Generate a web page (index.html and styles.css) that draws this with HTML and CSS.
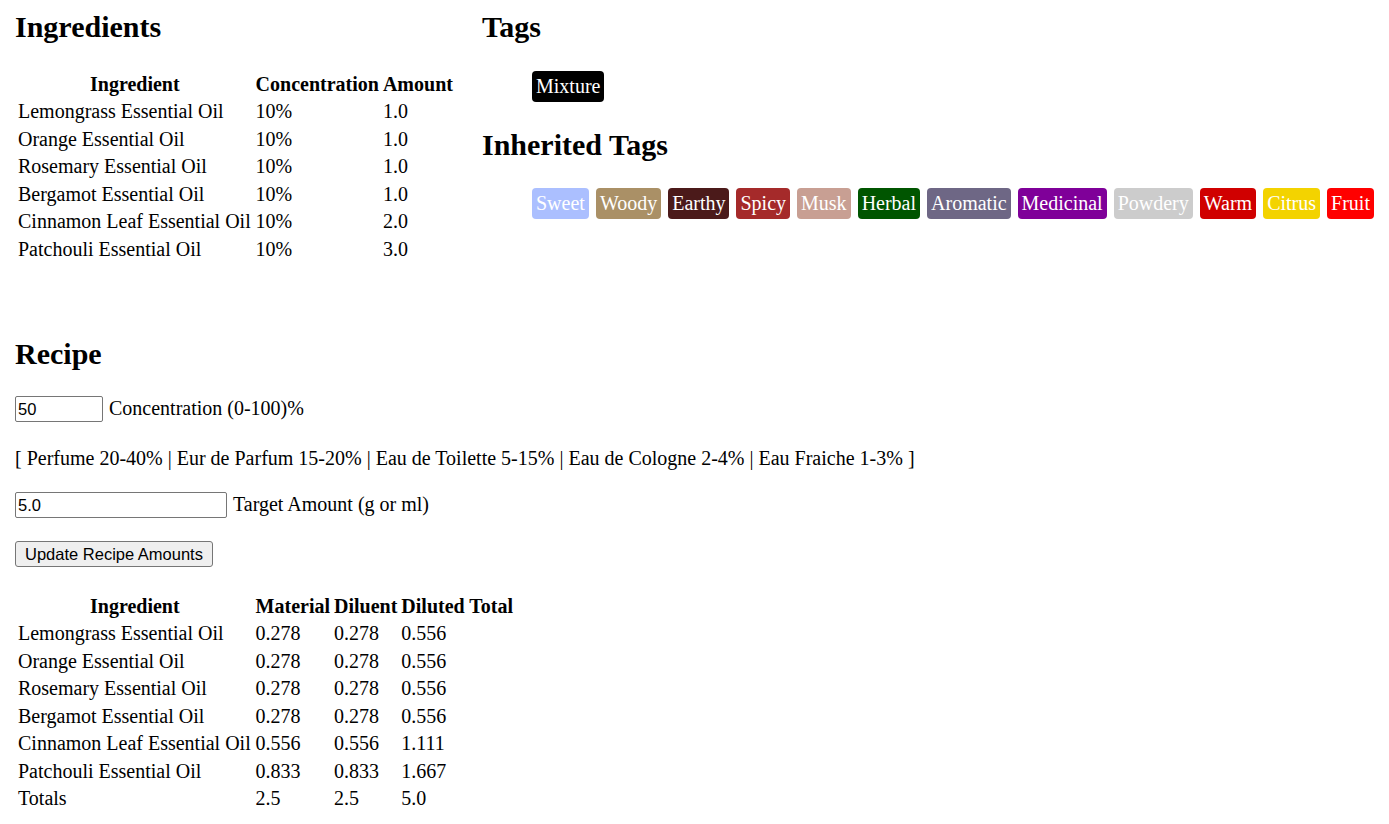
FILE: index.html
```html
<!DOCTYPE html>
<html>
<head>
<meta charset="utf-8">
<title>Mixture</title>
<link rel="stylesheet" href="styles.css">
</head>
<body>
<div class="top">
  <section class="ingredients">
    <h2>Ingredients</h2>
    <table class="grid ing-table">
      <thead>
        <tr><th class="col-name">Ingredient</th><th>Concentration</th><th>Amount</th></tr>
      </thead>
      <tbody>
        <tr><td>Lemongrass Essential Oil</td><td>10%</td><td>1.0</td></tr>
        <tr><td>Orange Essential Oil</td><td>10%</td><td>1.0</td></tr>
        <tr><td>Rosemary Essential Oil</td><td>10%</td><td>1.0</td></tr>
        <tr><td>Bergamot Essential Oil</td><td>10%</td><td>1.0</td></tr>
        <tr><td>Cinnamon Leaf Essential Oil</td><td>10%</td><td>2.0</td></tr>
        <tr><td>Patchouli Essential Oil</td><td>10%</td><td>3.0</td></tr>
      </tbody>
    </table>
  </section>
  <section class="tags">
    <h2>Tags</h2>
    <ul class="chips chips-own">
      <li class="chip chip-mixture">Mixture</li>
    </ul>
    <h2>Inherited Tags</h2>
    <ul class="chips chips-inherited">
      <li class="chip chip-sweet">Sweet</li>
      <li class="chip chip-woody">Woody</li>
      <li class="chip chip-earthy">Earthy</li>
      <li class="chip chip-spicy">Spicy</li>
      <li class="chip chip-musk">Musk</li>
      <li class="chip chip-herbal">Herbal</li>
      <li class="chip chip-aromatic">Aromatic</li>
      <li class="chip chip-medicinal">Medicinal</li>
      <li class="chip chip-powdery">Powdery</li>
      <li class="chip chip-warm">Warm</li>
      <li class="chip chip-citrus">Citrus</li>
      <li class="chip chip-fruit">Fruit</li>
    </ul>
  </section>
</div>

<section class="recipe">
  <h2>Recipe</h2>
  <div class="field field-conc">
    <input class="input input-conc" type="text" value="50">
    <label>Concentration (0-100)%</label>
  </div>
  <p class="guide">[ Perfume 20-40% | Eur de Parfum 15-20% | Eau de Toilette 5-15% | Eau de Cologne 2-4% | Eau Fraiche 1-3% ]</p>
  <div class="field field-target">
    <input class="input input-target" type="text" value="5.0">
    <label>Target Amount (g or ml)</label>
  </div>
  <div class="actions">
    <button class="btn" type="button">Update Recipe Amounts</button>
  </div>
  <table class="grid recipe-table">
    <thead>
      <tr><th class="col-name">Ingredient</th><th>Material</th><th>Diluent</th><th>Diluted Total</th></tr>
    </thead>
    <tbody>
      <tr><td>Lemongrass Essential Oil</td><td>0.278</td><td>0.278</td><td>0.556</td></tr>
      <tr><td>Orange Essential Oil</td><td>0.278</td><td>0.278</td><td>0.556</td></tr>
      <tr><td>Rosemary Essential Oil</td><td>0.278</td><td>0.278</td><td>0.556</td></tr>
      <tr><td>Bergamot Essential Oil</td><td>0.278</td><td>0.278</td><td>0.556</td></tr>
      <tr><td>Cinnamon Leaf Essential Oil</td><td>0.556</td><td>0.556</td><td>1.111</td></tr>
      <tr><td>Patchouli Essential Oil</td><td>0.833</td><td>0.833</td><td>1.667</td></tr>
      <tr><td>Totals</td><td>2.5</td><td>2.5</td><td>5.0</td></tr>
    </tbody>
  </table>
</section>
</body>
</html>
```
FILE: styles.css
```css
html, body {
  background: #ffffff;
}

body {
  margin: 0;
  padding: 10px 15px 0 15px;
  font-family: "Liberation Serif", "Times New Roman", serif;
  font-size: 20px;
  color: #000000;
}

h2 {
  margin: 0;
  font-size: 30px;
  line-height: 34px;
  font-weight: bold;
}

.top {
  display: flex;
  align-items: flex-start;
}

.ingredients {
  flex: 0 0 467px;
}

.tags {
  flex: 1 1 auto;
}

.grid {
  border-collapse: separate;
  border-spacing: 2px;
  margin-top: 25.5px;
  margin-left: 0;
}

.grid th,
.grid td {
  padding: 1px;
  line-height: 23.5px;
  white-space: nowrap;
}

.grid th {
  text-align: center;
  font-weight: bold;
}

.grid th.col-name {
  width: 233.6px;
}

.grid td {
  text-align: left;
}

.chips {
  list-style: none;
  margin: 0;
  padding: 0 0 0 50px;
  display: flex;
  flex-wrap: wrap;
  gap: 7px;
}

.chips-own {
  margin-top: 27px;
  margin-bottom: 26px;
}

.chips-inherited {
  margin-top: 26px;
}

.chip {
  display: block;
  padding: 4px 4px;
  line-height: 23px;
  border-radius: 4px;
  color: #ffffff;
}

.chip-mixture { background: #000000; }
.chip-sweet { background: #abbfff; }
.chip-woody { background: #aa9066; }
.chip-earthy { background: #4b1a1a; }
.chip-spicy { background: #a52a2a; }
.chip-musk { background: #c89f93; }
.chip-herbal { background: #005500; }
.chip-aromatic { background: #6e6785; }
.chip-medicinal { background: #7f0099; }
.chip-powdery { background: #cccccc; }
.chip-warm { background: #d00000; }
.chip-citrus { background: #f3d300; }
.chip-fruit { background: #ff0000; }

.recipe {
  margin-top: 73px;
}

.field {
  display: flex;
  align-items: center;
  gap: 6px;
  height: 26px;
}

.field-conc {
  margin-top: 25px;
}

.field label {
  line-height: 23px;
  position: relative;
  top: -1px;
}

.input {
  box-sizing: border-box;
  height: 26px;
  margin: 0;
  padding: 1px 2px;
  border: 1px solid #767676;
  border-radius: 2px;
  font-family: "Liberation Sans", Arial, sans-serif;
  font-size: 16.5px;
  color: #000000;
  background: #ffffff;
}

.input-conc {
  width: 88px;
}

.input-target {
  width: 212px;
}

.guide {
  margin: 24.5px 0 0 0;
  line-height: 23px;
}

.field-target {
  margin-top: 22.5px;
}

.actions {
  margin-top: 23px;
  height: 26px;
}

.btn {
  box-sizing: border-box;
  height: 26px;
  width: 198px;
  margin: 0;
  padding: 1px 8px;
  border: 1px solid #767676;
  border-radius: 3px;
  background: #efefef;
  font-family: "Liberation Sans", Arial, sans-serif;
  font-size: 16.5px;
  color: #000000;
}

.recipe-table {
  margin-top: 24.5px;
}
```
